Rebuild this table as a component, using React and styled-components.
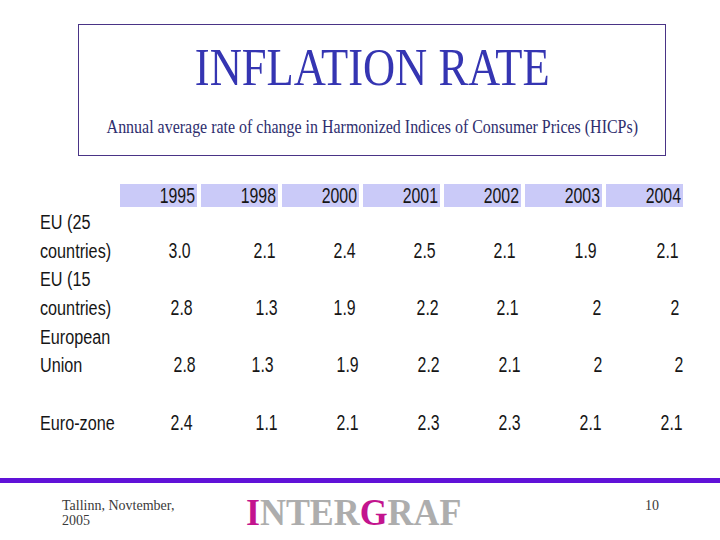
import React from "react";
import styled, { createGlobalStyle } from "styled-components";

const Global = createGlobalStyle`
  html, body { margin: 0; padding: 0; background: #ffffff; }
  body { width: 720px; height: 540px; overflow: hidden; }
  * { box-sizing: border-box; }
`;

const Slide = styled.div`
  width: 720px;
  height: 540px;
  display: flex;
  flex-direction: column;
  background: #ffffff;
`;

const TitleBox = styled.header`
  margin: 24px 0 0 78px;
  width: 588px;
  height: 132px;
  border: 1px solid #4a3486;
  display: flex;
  flex-direction: column;
  align-items: center;
  padding-top: 16px;
`;

const Title = styled.h1`
  margin: 0;
  font-family: "Liberation Serif", "Times New Roman", serif;
  font-weight: normal;
  font-size: 53px;
  line-height: 53px;
  color: #3535b2;
  white-space: nowrap;
  display: inline-block;
  transform: scaleX(0.84);
`;

const Subtitle = styled.p`
  margin: 23px 0 0;
  font-family: "Liberation Serif", "Times New Roman", serif;
  font-size: 19px;
  line-height: 19px;
  color: #2e2e6e;
  white-space: nowrap;
  display: inline-block;
  transform: scaleX(0.84);
`;

const Table = styled.section`
  margin: 28px 0 0 40px;
  display: flex;
  flex-direction: column;
`;

const Grid = styled.div`
  display: grid;
  grid-template-columns: 76px repeat(7, 77px);
  column-gap: 4px;
  height: ${(p) => p.$h}px;
  margin-top: ${(p) => p.$mt || 0}px;
`;

const HeadCell = styled.div`
  background: ${(p) => (p.$empty ? "transparent" : "#cacaf8")};
  text-align: right;
  padding-right: 2px;
  font-family: "Liberation Sans", Arial, sans-serif;
  font-size: 22px;
  line-height: 23px;
  color: #161616;
  white-space: nowrap;
`;

const Squeeze = styled.span`
  display: inline-block;
  transform: scaleX(0.72);
  transform-origin: right center;
`;

const LabelCell = styled.div`
  align-self: end;
  font-family: "Liberation Sans", Arial, sans-serif;
  font-size: 20px;
  line-height: 28.7px;
  color: #161616;
  white-space: nowrap;
`;

const LabelLine = styled.div`
  transform: scaleX(0.81);
  transform-origin: left center;
`;

const ValueCell = styled.div`
  align-self: end;
  text-align: right;
  padding-right: ${(p) => p.$pr}px;
  font-family: "Liberation Sans", Arial, sans-serif;
  font-size: 22px;
  line-height: 28.7px;
  color: #161616;
  white-space: nowrap;
`;

const Footer = styled.footer`
  margin-top: auto;
  height: 62px;
  display: flex;
  flex-direction: column;
`;

const FooterBar = styled.div`
  height: 5px;
  background: #6012d8;
`;

const FooterRow = styled.div`
  display: flex;
  align-items: flex-start;
  padding: 0 61px 0 62px;
`;

const FooterNote = styled.div`
  width: 184px;
  padding-top: ${(p) => p.$pt}px;
  font-family: "Liberation Serif", "Times New Roman", serif;
  font-size: 14px;
  line-height: 15px;
  color: #3a3a3a;
  white-space: nowrap;
`;

const PageNum = styled(FooterNote)`
  width: auto;
  margin-left: auto;
`;

const Logo = styled.div`
  padding-top: 11px;
  font-family: "Liberation Serif", "Times New Roman", serif;
  font-weight: bold;
  font-size: 37px;
  line-height: 37px;
  color: #adadad;
  white-space: nowrap;
  display: inline-block;
  transform: scaleX(0.97);
  transform-origin: left center;
`;

const Accent = styled.span`
  color: #c3148e;
`;

const years = ["1995", "1998", "2000", "2001", "2002", "2003", "2004"];

const rows = [
  { label: ["EU (25", "countries)"], values: ["3.0", "2.1", "2.4", "2.5", "2.1", "1.9", "2.1"], pr: [6, 2, 3, 4, 5, 5, 4] },
  { label: ["EU (15", "countries)"], values: ["2.8", "1.3", "1.9", "2.2", "2.1", "2", "2"], pr: [4, 0, 3, 1, 2, 1, 4] },
  { label: ["European", "Union"], values: ["2.8", "1.3", "1.9", "2.2", "2.1", "2", "2"], pr: [1, 4, 0, 0, 0, 0, 0] },
  { label: ["Euro-zone"], values: ["2.4", "1.1", "2.1", "2.3", "2.3", "2.1", "2.1"], pr: [4, 0, 0, 0, 0, 0, 0] },
];

export default function App() {
  return (
    <>
      <Global />
      <Slide>
        <TitleBox>
          <Title>INFLATION RATE</Title>
          <Subtitle>
            Annual average rate of change in Harmonized Indices of Consumer Prices (HICPs)
          </Subtitle>
        </TitleBox>

        <Table>
          <Grid $h={23}>
            <HeadCell $empty />
            {years.map((y) => (
              <HeadCell key={y}>
                <Squeeze>{y}</Squeeze>
              </HeadCell>
            ))}
          </Grid>
          {rows.map((r, i) => (
            <Grid key={i} $h={57.4} $mt={i === 0 ? 1 : 0}>
              <LabelCell>
                {r.label.map((l) => (
                  <LabelLine key={l}>{l}</LabelLine>
                ))}
              </LabelCell>
              {r.values.map((v, j) => (
                <ValueCell key={j} $pr={r.pr[j]}>
                  <Squeeze>{v}</Squeeze>
                </ValueCell>
              ))}
            </Grid>
          ))}
        </Table>

        <Footer>
          <FooterBar />
          <FooterRow>
            <FooterNote $pt={15}>
              Tallinn, Novtember,
              <br />
              2005
            </FooterNote>
            <Logo>
              <Accent>I</Accent>NTER<Accent>G</Accent>RAF
            </Logo>
            <PageNum $pt={15}>10</PageNum>
          </FooterRow>
        </Footer>
      </Slide>
    </>
  );
}
